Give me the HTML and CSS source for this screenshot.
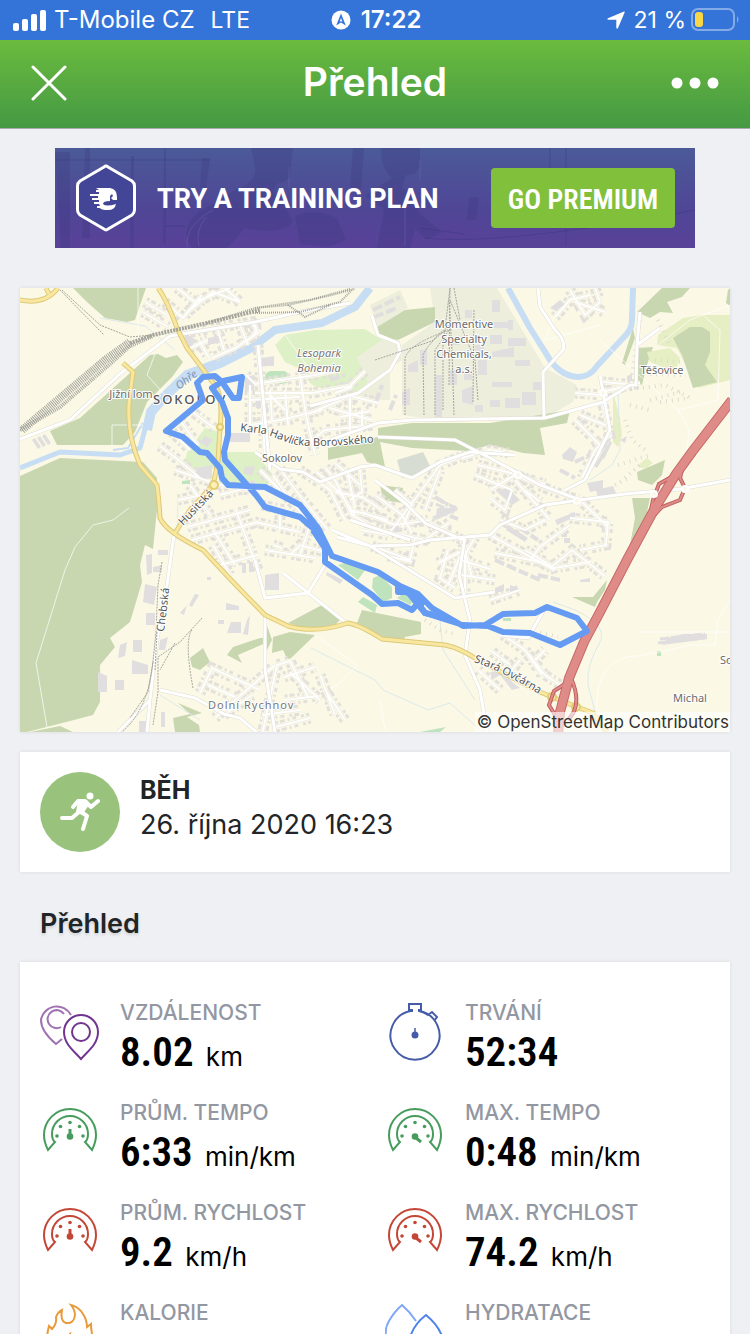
FILE: index.html
```html
<!DOCTYPE html>
<html lang="cs">
<head>
<meta charset="utf-8">
<meta name="viewport" content="width=device-width, initial-scale=1">
<title>Přehled</title>
<link rel="stylesheet" href="styles.css">
</head>
<body>
<div class="screen">
  <div class="status">
    <div class="status-side">
      <svg class="signal" viewBox="0 0 33 21" aria-hidden="true"><rect x="0" y="13" width="6" height="8" rx="2"/><rect x="9" y="9" width="6" height="12" rx="2"/><rect x="18" y="4" width="6" height="17" rx="2"/><rect x="27" y="0" width="6" height="21" rx="2"/></svg>
      <span>T-Mobile CZ</span><span class="network">LTE</span>
    </div>
    <div class="status-time">
      <svg class="compass" viewBox="0 0 20 20" aria-hidden="true"><circle cx="10" cy="10" r="9.5" fill="#fff"/><path d="M10 3.500 14.800 15.500 10 12.500 5.200 15.500Z" fill="#3474d8"/><path d="M10 8 11.500 12 10 11 8.500 12Z" fill="#fff"/></svg>
      <span>17:22</span>
    </div>
    <div class="status-side status-right">
      <svg class="arrow" viewBox="0 0 18 18" aria-hidden="true"><path d="M17 .5Q18 0 17.600 1.600L11 17Q10 18.500 9.300 16.800V8.800H1.300Q-.5 8.200 1 7.200Z" fill="#fff"/></svg>
      <span>21 %</span>
      <svg class="battery" viewBox="0 0 48 24" aria-hidden="true"><rect x="1" y="1" width="42" height="21" rx="6" fill="none" stroke="#84abe7" stroke-width="2"/><rect x="4" y="4" width="8" height="15" rx="3" fill="#f9d548"/><path d="M46 8Q49 11.500 46 15Z" fill="#84abe7"/></svg>
    </div>
  </div>

  <header class="bar">
    <button class="icon-button" aria-label="Zavřít"><svg class="close" viewBox="0 0 36 36"><path d="M2 2 34 34M34 2 2 34"/></svg></button>
    <h1>Přehled</h1>
    <button class="icon-button" aria-label="Další"><svg class="more" viewBox="0 0 48 12"><circle cx="6" cy="6" r="5.500"/><circle cx="24" cy="6" r="5.500"/><circle cx="42" cy="6" r="5.500"/></svg></button>
  </header>

  <main>
    <section class="banner">
      <svg class="banner-photo" viewBox="0 0 640 100" preserveAspectRatio="none" aria-hidden="true">
        <g fill="#39377c" opacity=".26">
          <path d="M196 0H238Q236 18 235 29 229 36 222 35L218 44Q229 49 233 65L238 74Q225 88 190 80L172 100H137L131 88Q131 68 158 56L180 42Q203 34 200 18Z"/>
          <path d="M326 0H365V19Q360 29 351 27L347 40Q363 45 364 65L387 84 372 92 360 81 355 100H322L329 61 310 48Q327 37 337 30Q326 20 326 0Z"/>
          <path d="M240 68Q258 59 282 70L291 92 273 99 245 96ZM147 10H155L151 40H145ZM298 0H309L306 41H295ZM30 0H35V90H27ZM414 49H424L421 72H412Z"/>
          <path d="M0 4H15V100H6ZM76 8H79V100H75ZM109 0H111V96H108Z"/>
        </g>
        <g fill="none" stroke="#312f73" opacity=".3"><path d="M0 12H155M110 78H130M511 0V98M370 90Q447 98 640 62M365 80 410 86M495 0V62"/></g>
        <g fill="none" stroke="#8177b5" opacity=".3"><path d="M158 62Q130 77 132 99M151 69Q140 82 144 98M350 52V98M234 19V40M365 12V32"/></g>
      </svg>
      <svg class="badge" viewBox="0 0 60 68" aria-hidden="true"><path d="M28 3Q30 1 32 3L56 17Q58.500 19 58.500 22V46Q58.500 49 56 51L32 65Q30 67 28 65L4 51Q1.500 49 1.500 46V22Q1.500 19 4 17Z" fill="#434596" stroke="#fff" stroke-width="3" stroke-linejoin="round"/><path d="M20 24H34Q41 25 41 33V36H37L35 34 37 32 36 30 34 32V37Q27 37 27 40 30 43 40 40 39 46 32 46 25 46 24 44H21V42H24L23 40H18V38H23V36H16V34H22V32H14V30H23V28H20V26H23Z" fill="#fff"/></svg>
      <strong>TRY A TRAINING PLAN</strong>
      <button class="premium">GO PREMIUM</button>
    </section>

    <section class="map" aria-label="Mapa trasy">
      <svg viewBox="20 288 710 444" role="img" aria-label="Trasa běhu v Sokolově">
        <defs>
          <g id="streets">
            <path d="M165 302 183 318 202 295M177 288 195 302 230 288M190 310 213 292 240 302 225 288M145 302 167 315M143 312 168 327M185 333 215 328 252 322 258 333 235 348 212 358M200 342 209 358M190 348 208 340M217 328 224 350M240 325 248 345M250 322Q261 326 252 337"/>
            <path d="M246 375 255 384 315 375 340 370M250 400 300 397M250 425 280 420 322 410M258 345 262 400 265 460M285 390 288 425M300 375 306 415 315 455M270 390 272 420M255 393H312L350 386 365 371M335 393 352 387M313 412 350 396 379 403M350 395V435M330 408 372 420M340 417 370 411M362 410V430M250 385V430M270 395 285 410M312 440 325 430 375 425"/>
            <path d="M160 446 176 458 200 478M172 432 190 450M180 420 198 446M190 410 214 428M175 470 220 485 260 492M178 500 212 493M190 485 210 515M220 495 258 485"/>
            <path d="M273 475 290 500 315 530M280 469 303 500 328 530M300 470 330 490 345 520M317 472 340 493 355 515M325 467 335 480 352 515 378 530M335 463 360 485M347 470 355 508M360 470 362 492 350 500M335 492 362 497 382 510M350 510 388 520"/>
            <path d="M375 495 402 515 412 533M395 490 412 505 402 528M412 503 388 535 362 530M362 512 395 525 430 520M412 503 440 465 465 455M425 510 440 470M380 530 425 540 450 522M372 546 410 560 415 538M388 556 412 562"/>
            <path d="M430 523 462 540 472 577M448 550 440 578 455 588M438 563 460 552M448 585 465 545M475 537 465 555V595M460 575 495 580M460 560 490 569M490 490 515 475 545 484M462 458 490 450 508 453M478 465 515 474M475 475 512 490 505 510 490 498M515 475 550 490 578 500M515 480 550 520M525 490 540 502M500 520 525 530 545 520M580 500 608 527M525 550 555 568 590 562M570 518 608 522 606 545 580 550M530 560 540 547 570 525M550 568 572 550 605 576M490 535 555 570M495 553 540 562M490 600 520 590"/>
            <path d="M555 317 570 300 590 295M570 290 585 315 600 302 595 288M575 302 605 312M602 400 610 436 595 450 582 478M575 420 600 445M580 415 605 425M603 382 625 384M575 393 602 395M602 392 640 383"/>
            <path d="M187 527 250 510M192 540 258 522M213 530 235 565M236 510 258 570M213 545 230 575M220 565 258 555M260 470 280 490M262 505 285 510M255 522 300 532M265 550 315 558M273 545 282 548M290 555 300 545 325 552M280 510 280 530M310 525 300 555"/>
            <path d="M200 693 212 668 260 690M208 685 235 697M224 715 252 695M215 718 275 665M262 735 277 665 290 661 308 697M284 677 315 667M290 672 320 700M320 675 335 715M325 690 345 720M285 700 318 696M262 715 300 710M276 727 310 718"/>
            <path d="M503 635 525 650 545 675 565 688M520 660 508 675M510 665 490 650M535 660 545 650M500 690 478 670M525 650 542 675"/>
          </g>
          <path id="karla" d="M240 431 265 434 292 444Q313 449 376 442"/>
          <path id="husitska" d="M183 526 222 486"/>
          <path id="chebska" d="M164 632 170 582"/>
          <path id="ovcarna" d="M474 662Q505 672 550 701"/>
          <path id="ohre" d="M179 390 205 370"/>
        </defs>
        <rect x="20" y="288" width="710" height="444" fill="#fbf9e6"/>
        <g class="industry">
          <path d="M430 288H497L545 368 577 385 573 402 545 418 450 422 402 415V345L435 322ZM357 357 378 338 400 342 402 360 368 385ZM370 305 400 290 408 308 377 327ZM365 385 390 370V400H350Z"/>
        </g>
        <g class="forest">
          <path d="M73 288H146L140 305 135 320 127 322 105 318 87 302ZM50 431 80 418 120 382 150 355 158 354 166 358 177 355 183 362 172 377 147 402 135 432 123 445H57ZM20 476 60 458 143 462 157 478V510L153 549 145 545 140 565 142 582 130 622 110 638 115 647 100 665V702L93 715 70 721 27 732H20Z"/>
          <path d="M30 732 60 726 73 732ZM377 327 405 310 435 307V322L398 340 378 337ZM378 428 412 423H490L570 410 567 423 540 428 545 455 523 453 490 445 468 451 412 448 380 442 385 467 367 462 362 453 328 460V448L378 437ZM380 485 403 488 402 503 383 500Z"/>
          <path d="M662 288H690L682 297 667 302 673 313 660 312 650 318 637 312ZM637 348 653 347 647 365 642 385 637 383ZM633 328 635 338 625 365 622 363ZM637 472 665 460 662 475 652 485 638 480ZM632 498H650L645 522 630 545 635 518ZM572 597H593L607 580 605 590 597 602 595 607Z"/>
          <path d="M362 610 421 622V634L405 637 403 642 382 637 357 623ZM322 605 340 620 335 625 313 631 288 623ZM273 637 290 632 315 635 288 661 283 650 272 653ZM227 655 233 647 260 638H268V642L238 655 242 663ZM190 658 203 648 210 662 200 670 192 667ZM178 703 202 713 187 717 199 725 200 732H175L173 718 190 714ZM728 290 730 288V306L726 303ZM265 620 272 640 266 652Z"/>
        </g>
        <g class="meadow">
          <path d="M658 335 683 318 703 315H730V380L698 388 677 348 657 345ZM647 352 670 348 680 358 675 372 650 362ZM613 392 620 418 622 435 618 447 613 442ZM637 466 647 458 653 463 645 469Z"/>
        </g>
        <path class="forest" d="M673 338 690 327 702 327 710 332V352L705 365 717 382 693 388 682 355Z"/>
        <path class="park" d="M275 345 285 335 315 330 365 329 382 340 357 357 368 382 358 393H335L312 385 298 368 285 362ZM183 472 187 452 205 428 220 432 217 452 255 452 273 475 268 485H228L218 468Z"/>
        <g class="pitch"><rect x="265" y="371" width="24" height="13" rx="6"/><path d="M338 565 348 562 365 570 358 580ZM373 578 380 575 392 587V598L383 602 372 588ZM397 598 405 592 413 602 410 605ZM358 602 363 597 377 605 375 613ZM182 481 190 480V484H182ZM503 618H511V621H503ZM420 732 446 727 440 732ZM657 651H661V656H657Z"/></g>
        <path fill="#d7ddd2" d="M397 460 423 452 432 470 402 478Z"/>
        <g class="water">
          <path stroke-width="5" d="M20 468 60 452 120 455 140 448 148 418"/>
          <path stroke-width="10" d="M147 430 151 412 163 398 187 375 220 363 260 343"/>
          <path stroke-width="8" d="M250 349 275 330 322 323 355 307 370 288"/>
          <path stroke-width="6" d="M508 288 530 328 547 355Q558 375 577 377 590 377 597 366L623 338Q632 330 632 320L633 288"/>
          <path stroke-width="2" d="M113 450 128 448 143 423"/>
          <path class="stream" d="M100 318 145 326 175 350M311 648 375 680 383 690 428 710 450 703 480 730M440 620 443 650 475 700M553 602 575 610Q606 625 601 640 586 665 588 685L596 715M178 500 177 540M160 695 200 720M618 392 620 450 612 465 590 480"/>
        </g>
        <path class="trail" d="M129 508 113 520 93 525 75 547 65 570 36 663 47 727M138 288V355M143 425H112V445M155 354 147 375 165 395M285 335 310 370M658 345 690 320 730 305M703 315 720 330 718 400 678 410 600 340M678 410 689 430 685 470M730 600 718 620 715 645H690Q650 655 627 657 595 665 597 710M315 635 357 665 338 685 300 700M380 700 385 730M730 632H640M555 315 545 340 600 325"/>

        <use href="#streets" class="houses"/>
        <use href="#streets" class="house-gap"/>
        <g class="buildings">
          <path d="M185 333 195 339 190 352 183 346ZM208 338 222 335V342L208 345ZM245 377 254 375V390L245 392ZM32 440 35 438 41 447 38 449ZM37 438 40 436 46 445 43 447ZM42 436 45 434 51 443 48 445ZM227 433H250V442H227ZM205 436 213 440 207 447 200 442ZM196 468 212 465V477L202 480 196 475ZM245 467 255 466 252 476 243 473Z"/>
          <path d="M145 584 157 587 154 605 143 602ZM153 567 162 565V572H153ZM158 550H168V555H158ZM146 555 152 554V573L147 575ZM146 613H155V625H146ZM133 640H142V652H133ZM120 645 127 642 125 656 118 658ZM132 660 148 665V674H132ZM98 672 107 676V692H98ZM115 680H124V690H115ZM160 640 168 637 165 650H159ZM189 605 195 594 199 595 192 607ZM180 613 187 605 184 615ZM231 622H241V633H227ZM247 620 250 615 248 635 243 634ZM226 603 239 606V610H226ZM139 721H146V732H139ZM161 712H165V727H161ZM218 620H224V624H218ZM207 577H211V580H207ZM242 563H246V573H242ZM249 562H253V572H249Z"/>
          <path d="M327 572 343 580 340 584 326 575ZM265 575 279 573V590H265ZM391 526H399V532H391ZM497 492 507 487 520 500 512 505ZM437 508H447L443 516H436ZM432 517 455 505 458 510 436 520ZM262 358 274 356V366H262ZM256 400H262V408H256ZM450 340 460 338V345H450ZM462 390 473 386V405L462 402ZM435 375H442V417H435ZM420 350H427V365H420ZM402 392 410 388V405H402ZM408 365 418 360V372H408Z"/>
          <path d="M492 322H508V328H492ZM490 335H502V344H490ZM508 338H526V346H508ZM492 352 514 347V357H492ZM515 360H530V366H515ZM492 382H512V387H492ZM505 398H520V408H505ZM490 400H500V407H490ZM522 392H536V405H522ZM533 382H543V390H533ZM475 345H484V353H475ZM478 360H487V375H478ZM475 405H483V412H475ZM450 370H457V385H450ZM464 372H472V380H464ZM492 300H500V312H492ZM465 310H472V318H465ZM508 320H513V330H508Z"/>
          <path d="M562 455 570 447 577 452 573 462 563 459ZM587 483 603 480V489L590 492ZM591 465 595 457 592 455 587 463ZM597 468 605 455 602 453 594 466ZM604 459 612 443 609 441 600 456ZM600 450 608 437 611 439 603 452ZM596 490 613 486 617 496 598 498ZM495 588 504 584V591L495 593ZM510 585 518 588V594L510 592ZM520 688 512 690 500 675 492 680 490 672 505 670 512 682ZM508 525 528 538 525 542 506 530ZM555 520 575 512V517L557 525ZM564 538H570V543H564ZM580 580 590 578V582H580ZM563 533H567V537H563ZM620 440 627 436 625 443ZM667 638 683 634 707 634V639L662 645ZM550 308 560 300 565 304 556 311ZM627 376 632 374V381H627Z"/>
        </g>
        <g class="sheds"><path stroke-width="4" stroke-dasharray="10 3" d="M373 310 400 297M374 317 397 308M376 402 382 385M390 410 396 395M435 497 448 505M438 511 458 519M415 524 426 520M330 380 345 375M560 470 575 478M575 462 590 455M520 528 538 540M538 575 560 580M495 560 540 580"/><path stroke-width="3" stroke-dasharray="9 2" d="M436 504 455 513M439 500 458 509M658 643 705 638M660 639 705 634"/></g>
        <path class="dots" d="M625 420 632 440 648 452M625 390 665 385 690 398M650 400 680 392M618 465 650 455M625 478 640 465M615 485 628 478M425 620 440 630 455 634M630 405 650 410M660 402 690 398M650 374 685 375M540 633 558 637M658 320 670 345M640 320 632 375M655 360 680 362"/>

        <use href="#streets" class="casing"/>
        <use href="#streets" class="street"/>
        <g class="major">
          <path id="m1" d="M20 439 70 420 120 374 170 336 255 322 300 312 350 303M174 535 167 585 157 640 150 700 147 732M160 690 195 698 224 714 240 718 260 735M150 700 130 720 118 732M258 345 270 470M255 452 280 469 303 472 320 482 360 467 375 465 412 478 440 462 470 452 515 455M372 316 378 335 398 343 400 352 390 370 358 393 310 406M330 440 378 423 412 420 545 418 603 402 630 385H636L637 345 660 328M637 345 640 312M544 417 543 372 563 350Q566 340 555 330L540 307 538 288M378 437 455 440 490 458 540 485 580 500 625 494 680 489 730 480M337 537 370 546 410 545 430 540 490 535 500 525 545 505 580 500M463 540 425 523 405 503 375 480M255 560 265 598 308 593 328 560M283 573 345 622M265 615 265 670 275 732M465 537 459 575 470 620 465 655 480 690 487 732M332 530 370 546 455 598 495 592M545 608 528 638 500 635M600 375 603 392 610 430 585 480 565 490M350 520 410 540"/>
        </g>
        <use href="#m1" class="major-fill"/>
        <g class="yellow-case"><path id="y1" d="M20 300Q45 305 58 288M158 288Q167 300 177 328L187 348 217 388Q223 402 220 428L218 462 213 485 190 510 175 533M123 363 133 372 130 395Q125 430 140 465L157 485Q159 500 160 518 166 532 203 550L233 582 265 615 288 626Q315 634 348 623 360 625 382 639L445 645Q460 648 478 660L540 692 577 707 593 713 607 732M46 288 49 294"/></g>
        <use href="#y1" class="yellow"/>
        <g class="yellow-dot"><circle cx="220" cy="427" r="3"/><circle cx="214" cy="485" r="4"/><circle cx="552" cy="697" r="4"/><circle cx="576" cy="707" r="4"/></g>

        <g class="rail">
          <path stroke-width="8" stroke-dasharray="1 1" d="M22 430 105 360 130 342"/>
          <path stroke-width="4" stroke-dasharray="1 1" d="M20 430 60 407 110 364 130 346 153 336"/>
          <path stroke-width="4" stroke-dasharray="2 1" d="M130 343 153 335 207 323 260 310"/>
          <path stroke-width="2" stroke-dasharray="1 1" d="M207 323 255 308 288 305 332 295 355 289M255 313 300 312 340 302 353 289M255 308 310 300 350 289M288 305 305 317 330 305"/>
          <path d="M60 290 104 335M62 290 100 325 130 337 153 335M375 360 432 341 452 322M405 415V358Q410 343 450 330M424 415 423 355Q430 340 452 326M435 415V350L455 322M443 410V345L450 288M449 385 450 288M454 415 452 350 449 300M474 310 473 402M478 400 475 360 450 300M454 288 460 320"/>
          <path d="M162 562 158 585 156 632 153 662 148 692 130 718M153 662Q148 710 122 732M157 632 155 670M202 618 180 642 158 657 158 692 153 725M192 630Q184 640 193 688M175 643 160 670"/>
        </g>
        <g class="motor-case"><path id="motor" d="M732 400 692 452 676 474 655 508 628 558 600 612 584 642 569 678 560 712 558 734"/></g>
        <g class="ramp-case"><path id="ramps" d="M675 475 659 484 653 500 649 520M682 470 680 478 685 488 680 500 662 507 645 525M568 682 554 691 549 705 558 720M571 678Q583 705 568 720"/></g>
        <use href="#ramps" class="ramp"/>
        <use href="#motor" class="motor"/>
        <g class="roundabout"><circle cx="654" cy="494" r="3"/><circle cx="685" cy="489" r="3"/><circle cx="518" cy="475" r="3"/><circle cx="577" cy="501" r="3"/><circle cx="603" cy="393" r="3"/></g>

        <g class="labels">
          <g text-anchor="middle">
            <text x="464" y="328">Momentive</text><text x="464" y="343">Specialty</text><text x="464" y="358">Chemicals,</text><text x="464" y="373">a.s.</text>
            <text x="319" y="357" class="italic">Lesopark</text><text x="319" y="372" class="italic">Bohemia</text>
            <text x="662" y="374">Těšovice</text><text x="131" y="398">Jižní lom</text><text x="282" y="462">Sokolov</text><text x="690" y="702">Michal</text>
          </g>
          <text x="153" y="404" class="city">SOKOLOV</text>
          <text x="208" y="709" class="village">Dolní Rychnov</text>
          <text x="720" y="664">So</text>
          <text class="road"><textPath href="#karla">Karla Havlíčka Borovského</textPath></text>
          <text class="road"><textPath href="#husitska">Husitská</textPath></text>
          <text class="road"><textPath href="#chebska">Chebská</textPath></text>
          <text class="road"><textPath href="#ovcarna">Stará Ovčárna</textPath></text>
          <text class="river"><textPath href="#ohre">Ohře</textPath></text>
        </g>
        <g class="route">
          <path d="M315 530 300 517 265 507 256 495 225 460 224 452 228 435V418L222 402 212 388 223 381 242 377 239 398 233 398 222 382 215 376 203 377 197 383 203 400 166 431 183 437 200 452 207 453 220 468 222 478 228 485 265 487 300 505 318 528 332 556 378 572 400 586 418 594 432 608 463 626 485 625 503 614 535 613 547 607 577 618 587 631 560 645 530 633 503 632 488 626 463 625 425 613 418 603 412 610 398 603 382 604 372 595 325 562V548L313 530"/>
          <path d="M398 585V592H408L425 613 440 616M400 588 425 604"/>
        </g>
      </svg>
      <a class="credit" href="#">© OpenStreetMap Contributors</a>
    </section>

    <section class="activity card">
      <div class="sport"><svg viewBox="0 0 40 40" aria-hidden="true"><circle cx="30" cy="4" r="3.500" fill="#fff"/><path d="M13 15 18 9H25L31 15 38 9M25 10 19 20 12 26H2M20 19 27 24 23 37" fill="none" stroke="#fff" stroke-width="4" stroke-linecap="round" stroke-linejoin="round"/><path d="M18 8H27L29 13 22 23 16 20Z" fill="#fff"/></svg></div>
      <div class="activity-text"><strong>BĚH</strong><time datetime="2020-10-26T16:23">26. října 2020 16:23</time></div>
    </section>

    <h2>Přehled</h2>

    <section class="stats card">
      <svg class="sprites" aria-hidden="true">
        <symbol id="gauge" viewBox="0 -2 60 60"><path d="M8 45Q4 37 4 30A26 26 0 0 1 56 30Q56 37 52 45L45 37Q48 35 48 29A18 18 0 0 0 12 29Q12 35 15 37Z"/><g fill="currentColor" stroke="none"><circle cx="17" cy="31" r="1.800"/><circle cx="20.500" cy="21.500" r="1.800"/><circle cx="30" cy="17.500" r="1.800"/><circle cx="39.500" cy="21.500" r="1.800"/><circle cx="43" cy="31" r="1.800"/><circle cx="30" cy="31.500" r="3.300"/></g></symbol>
      </svg>
      <dl>
        <div class="stat">
          <svg class="stat-icon purple" viewBox="0 0 60 60"><g stroke="#a072b3"><path d="M31 12A16 16 0 0 0 1 17C1 27 10 36 16 41L22 36"/><path d="M24 11A9 9 0 1 0 21 24"/></g><path d="M41 12A17 17 0 0 1 58 29C58 41 48 48 41 56 34 48 24 41 24 29A17 17 0 0 1 41 12Z"/><circle cx="41" cy="29" r="9"/></svg>
          <dt>VZDÁLENOST</dt><dd><b>8.02</b> <span>km</span></dd>
        </div>
        <div class="stat">
          <svg class="stat-icon blue" viewBox="0 0 60 60"><path d="M26 8A24.500 24.500 0 1 0 34 8V7H36V1H24V7H27V9M34 8Q39 9 43 12L47 9 52 14 49 18"/><circle cx="30" cy="32" r="2.500" fill="currentColor"/><path stroke-width="1.500" d="M30 31V25"/></svg>
          <dt>TRVÁNÍ</dt><dd><b>52:34</b></dd>
        </div>
        <div class="stat">
          <svg class="stat-icon green" viewBox="0 0 60 60"><use href="#gauge"/><path stroke-width="3" d="M30 34V26"/></svg>
          <dt>PRŮM. TEMPO</dt><dd><b>6:33</b> <span>min/km</span></dd>
        </div>
        <div class="stat">
          <svg class="stat-icon green" viewBox="0 0 60 60"><use href="#gauge"/><path stroke-width="3" d="M30 34 36 39"/></svg>
          <dt>MAX. TEMPO</dt><dd><b>0:48</b> <span>min/km</span></dd>
        </div>
        <div class="stat">
          <svg class="stat-icon red" viewBox="0 0 60 60"><use href="#gauge"/><path stroke-width="3" d="M30 34V26"/></svg>
          <dt>PRŮM. RYCHLOST</dt><dd><b>9.2</b> <span>km/h</span></dd>
        </div>
        <div class="stat">
          <svg class="stat-icon red" viewBox="0 0 60 60"><use href="#gauge"/><path stroke-width="3" d="M30 34 36 39"/></svg>
          <dt>MAX. RYCHLOST</dt><dd><b>74.2</b> <span>km/h</span></dd>
        </div>
        <div class="stat">
          <svg class="stat-icon orange" viewBox="0 0 60 60"><path d="M10 47Q5 37 9 23L12 26Q17 21 16 14 18 9 22 7 20 18 26 20 34 21 35 12 35 7 31 2 39 4 43 11 47 17 47 24L51 21Q51 25 52 31 54 40 50 47M25 41Q25 35 30 31 29 37 35 41"/></svg>
          <dt>KALORIE</dt>
        </div>
        <div class="stat">
          <svg class="stat-icon water-blue" viewBox="0 0 60 60"><path stroke="#81a8f6" d="M5 44Q-3 29 4 18 9 9 17 2 25 9 31 18"/><path d="M23 46Q24 25 41 12 58 26 59 43"/></svg>
          <dt>HYDRATACE</dt>
        </div>
      </dl>
    </section>
  </main>
</div>
</body>
</html>
```
FILE: styles.css
```css
* { box-sizing: border-box; }
body {
  margin: 0;
  background: #eff0f3;
  color: #222528;
  font-family: Inter, "Liberation Sans", sans-serif;
}
button { border: 0; padding: 0; background: none; color: inherit; font: inherit; }
svg { display: block; flex: none; }
.screen { height: 100vh; overflow: hidden; }

.status {
  display: grid;
  grid-template-columns: 1fr auto 1fr;
  align-items: center;
  height: 40px;
  padding: 0 11px 0 13px;
  background: #3474d8;
  color: #fff;
  font-size: 24px;
  line-height: 40px;
}
.status-side, .status-time { display: flex; align-items: center; gap: 8px; }
.status-right { justify-content: flex-end; gap: 5px; font-size: 23px; }
.status-right span { margin-left: 4px; }
.status-time { font-weight: 600; gap: 10px; }
.network { margin-left: 8px; font-size: 23px; }
.signal { width: 33px; height: 21px; fill: #fff; }
.compass { width: 20px; height: 20px; }
.arrow { width: 18px; height: 18px; }
.battery { width: 48px; height: 24px; }

.bar {
  display: flex;
  align-items: center;
  justify-content: space-between;
  height: 89px;
  padding: 0 31px 2px;
  background: linear-gradient(#6abb3e, #459943);
  border-bottom: 1px solid #a9acab;
  color: #fff;
}
.bar h1 { margin: 0; padding-bottom: 2px; font-size: 39px; font-weight: 600; line-height: 48px; }
.icon-button { width: 48px; height: 48px; display: flex; align-items: center; }
.close { width: 36px; height: 36px; fill: none; stroke: #fff; stroke-width: 3; stroke-linecap: round; }
.more { width: 48px; height: 12px; fill: #fff; }

main { padding: 19px 20px 0; }
.banner {
  position: relative;
  display: flex;
  align-items: center;
  max-width: 640px;
  height: 100px;
  margin: 0 auto 40px;
  padding: 0 20px 0 21px;
  background: linear-gradient(#4b5a98, #504596 65%, #594299);
  color: #fff;
}
.banner-photo { position: absolute; inset: 0; width: 100%; height: 100%; }
.badge { position: relative; width: 60px; height: 68px; }
.banner strong {
  position: relative;
  margin-left: 21px;
  padding-top: 2px;
  font-family: Roboto, sans-serif;
  font-size: 27px;
  font-weight: 700;
}
.premium {
  position: relative;
  width: 184px;
  height: 60px;
  margin-left: auto;
  padding-top: 2px;
  border-radius: 4px;
  background: #81c03b;
  font-family: "Roboto Condensed", "Liberation Sans Narrow", Roboto, sans-serif;
  font-size: 28px;
  font-weight: 600;
  white-space: nowrap;
}

.map, .card { background: #fff; box-shadow: 0 0 3px #d5d7dc; }
.map { position: relative; margin-bottom: 20px; }
.map > svg { width: 100%; height: auto; }
.credit {
  position: absolute;
  right: 0;
  bottom: 0;
  padding: 0 1px 0 2px;
  background: rgba(255, 255, 255, .6);
  color: #333;
  font-size: 17px;
  line-height: 20px;
  text-decoration: none;
}

.industry { fill: #eeeedd; }
.forest { fill: #c8d7b0; }
.meadow { fill: #e6eec3; }
.park { fill: #def0c6; }
.pitch { fill: #bfe3bd; }
.buildings { fill: #e0dede; }
.sheds { fill: none; stroke: #e0dede; }
.water { fill: none; stroke: #c6ddf3; stroke-linejoin: round; }
.stream { stroke: #dde9ea; stroke-width: 1; }
.trail { fill: none; stroke: #fff; stroke-width: 1; opacity: .7; }
.dots { fill: none; stroke: #dddcd0; stroke-width: 4; stroke-dasharray: 1 5; }
.houses { fill: none; stroke: #e3e0dc; stroke-width: 11; stroke-dasharray: 3 2 5 3 2 3 4 5; }
.house-gap { fill: none; stroke: #fbf9e6; stroke-width: 5; }
.casing { fill: none; stroke: #e9e7dc; stroke-width: 3; }
.street { fill: none; stroke: #fff; stroke-width: 2; }
.major { fill: none; stroke: #dfddd3; stroke-width: 4; }
.major-fill { fill: none; stroke: #fff; stroke-width: 3; }
.major path { stroke: inherit; }
.yellow-case { fill: none; stroke: #dcc979; stroke-width: 5; }
.yellow { fill: none; stroke: #f9e79f; stroke-width: 3; }
.yellow-dot { fill: #fbf0b8; stroke: #e3cd72; stroke-width: 2; }
.rail { fill: none; stroke: #a5a59d; stroke-width: 1; stroke-dasharray: 2 1; }
.motor-case { fill: none; stroke: #c76867; stroke-width: 10; }
.motor { fill: none; stroke: #df8c89; stroke-width: 8; }
.ramp-case { fill: none; stroke: #c05f5f; stroke-width: 4; }
.ramp { fill: none; stroke: #df8c89; stroke-width: 2; }
.roundabout { fill: #fbf9e6; stroke: #fff; stroke-width: 2; }
.labels {
  fill: #6b6b6b;
  font-family: "Noto Sans", sans-serif;
  font-size: 11px;
  paint-order: stroke;
  stroke: #fff;
  stroke-width: 2px;
  stroke-linejoin: round;
}
.labels .italic { font-style: italic; fill: #777; }
.labels .city { font-size: 13px; font-weight: 500; letter-spacing: 2px; fill: #555; }
.labels .village { letter-spacing: 1px; fill: #777; }
.labels .road { fill: #555; }
.labels .river { fill: #7c95b5; font-style: italic; stroke: none; }
.route { fill: none; stroke: #659bf3; stroke-width: 6; stroke-linejoin: round; }

.activity { display: flex; align-items: flex-start; gap: 20px; min-height: 120px; padding: 20px; }
.sport {
  display: grid;
  place-items: center;
  width: 80px;
  height: 80px;
  border-radius: 50%;
  background: #99c27d;
}
.sport svg { width: 40px; height: 40px; }
.activity-text { display: flex; flex-direction: column; font-size: 27px; line-height: 35px; }
.activity-text strong { padding-top: 1px; font-weight: 700; font-size: 25px; line-height: 34px; }
h2 { margin: 32px 20px 18px; font-size: 27px; font-weight: 600; line-height: 40px; text-shadow: 0 2px 3px #cfd1d5; }

.stats { padding: 39px 0 0 20px; }
.stats dl { display: grid; grid-template-columns: 1fr 1fr; margin: 0; }
.sprites { position: absolute; width: 0; height: 0; }
.stat {
  display: grid;
  grid-template-columns: 60px 1fr;
  grid-template-rows: 24px 1fr;
  column-gap: 20px;
  height: 100px;
}
.stat-icon {
  grid-row: 1 / 3;
  width: 60px;
  height: 60px;
  margin-top: 2px;
  fill: none;
  stroke: currentColor;
  stroke-width: 2;
}
.purple { color: #71358f; }
.blue { color: #465ca8; }
.green { color: #469c5c; }
.red { color: #c44637; }
.orange { color: #e99a3b; }
.water-blue { color: #4e83e9; }
dt { color: #9297a2; font-size: 21px; font-weight: 500; line-height: 24px; }
dd { margin: 0; color: #000; font-size: 26px; line-height: 54px; white-space: nowrap; }
dd b {
  margin-right: 5px;
  font-family: "Roboto Condensed", "Liberation Sans Narrow", Roboto, sans-serif;
  font-size: 41px;
  font-weight: 600;
}
```
